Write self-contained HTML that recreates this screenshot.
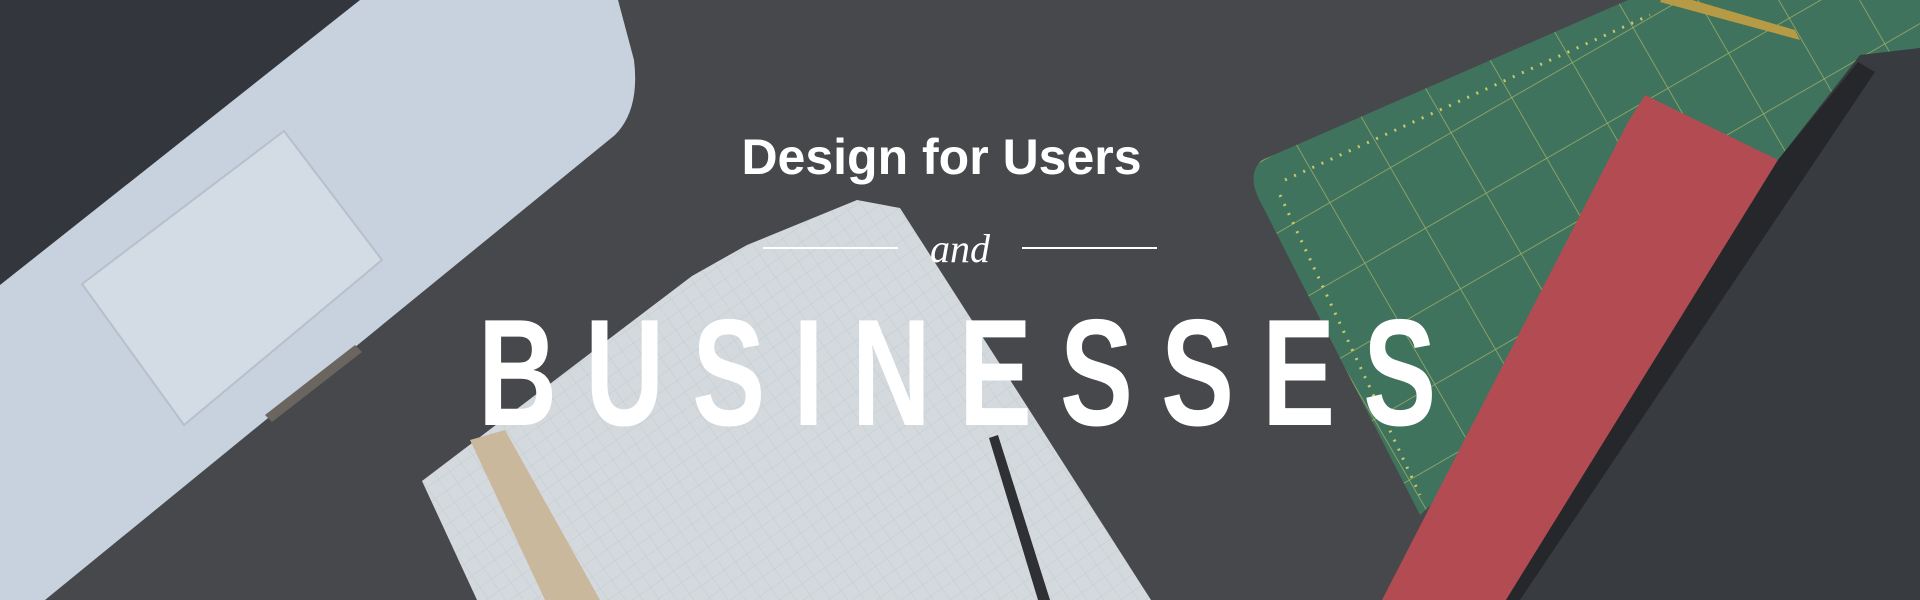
<!DOCTYPE html>
<html><head><meta charset="utf-8"><style>
html,body{margin:0;padding:0;width:1920px;height:600px;overflow:hidden;background:#46484b}
.wrap{position:relative;width:1920px;height:600px}
svg{position:absolute;left:0;top:0}
.t{position:absolute;color:#fff;font-family:"Liberation Sans",sans-serif;white-space:nowrap}
</style></head><body><div class="wrap">
<svg width="1920" height="600" viewBox="0 0 1920 600">
<defs>
<pattern id="grid" width="14" height="14" patternUnits="userSpaceOnUse" patternTransform="rotate(-35)">
<path d="M0 0H14M0 0V14" stroke="#b9c4cc" stroke-width="1" fill="none"/></pattern>
<pattern id="mgrid" width="70" height="70" patternUnits="userSpaceOnUse" patternTransform="rotate(-30)">
<path d="M0 0H70M0 0V70" stroke="#c9c96a" stroke-width="1.5" fill="none"/></pattern>
</defs>
<rect width="1920" height="600" fill="#46484b"/>
<path d="M0 0H618L634 60Q640 110 615 135L45 600H0Z" fill="#c7d2de"/>
<path d="M0 0H360L0 285Z" fill="#33373d"/>
<path d="M82 284L284 131L382 260L184 425Z" fill="#d3dbe5" stroke="#b6c0cc" stroke-width="2" stroke-linejoin="round"/>
<path d="M265 415L355 345L362 352L272 422Z" fill="#6b6560"/>
<path d="M422 481L692 276L747 245L857 200L900 208L1151 600H477Z" fill="#d3d9dd"/>
<path d="M422 481L692 276L747 245L857 200L900 208L1151 600H477Z" fill="url(#grid)" opacity=".6"/>
<path d="M470 440L505 430L600 600H545Z" fill="#c9b89c"/>
<path d="M989 438L998 435L1050 600H1038Z" fill="#2e3033"/>
<path d="M1262 160L1628 0H1920V60L1420 515L1262 205Q1245 175 1262 160Z" fill="#3f735d"/>
<path d="M1262 160L1628 0H1920V60L1420 515L1262 205Q1245 175 1262 160Z" fill="url(#mgrid)" opacity=".7"/>
<path d="M1285 180L1650 15" stroke="#c9c96a" stroke-width="3" stroke-dasharray="2 8"/>
<path d="M1280 195L1420 495" stroke="#c9c96a" stroke-width="3" stroke-dasharray="2 8"/>
<path d="M1660 2L1800 40L1795 30L1665 -8Z" fill="#b79a45"/>
<path d="M1628 122L1645 95L1778 160L1506 600H1382Z" fill="#b24c52"/>
<path d="M1778 160L1860 55L1920 48V600H1506Z" fill="#383c41"/>
<path d="M1778 160L1858 62L1875 72L1520 600H1506Z" fill="#25272a"/>
</svg>
<div class="t" style="left:728px;top:128px;font-size:50px;font-weight:bold;width:427px;text-align:center">Design for Users</div>
<div style="position:absolute;left:763px;top:247px;width:135px;height:2px;background:#fff"></div>
<div style="position:absolute;left:1022px;top:247px;width:135px;height:2px;background:#fff"></div>
<div class="t" style="left:915px;top:225px;width:90px;text-align:center;font-family:'Liberation Serif',serif;font-style:italic;font-size:40px">and</div>
<div class="t" style="left:478px;top:288px;font-size:152px;font-weight:bold;letter-spacing:39px;transform:scaleX(0.72);transform-origin:0 0;line-height:170px">BUSINESSES</div>
</div></body></html>
